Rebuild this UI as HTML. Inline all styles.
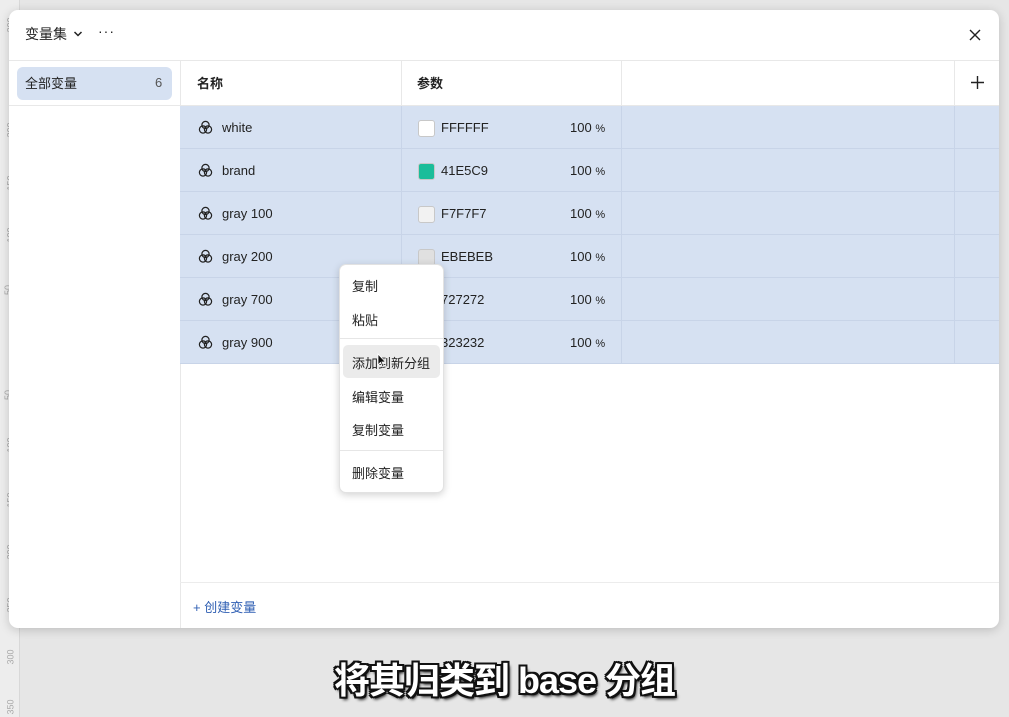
<!DOCTYPE html>
<html><head><meta charset="utf-8"><style>
*{box-sizing:border-box;margin:0;padding:0}
body{width:1009px;height:717px;background:#e6e6e6;position:relative;overflow:hidden;font-family:"Liberation Sans","Noto Sans CJK SC",sans-serif;color:#222;font-size:13px}
.ruler{position:absolute;left:0;top:0;width:20px;height:717px;background:#ededed;border-right:1px solid #d8d8d8}
.rl{position:absolute;left:3px;font-size:9px;color:#aaa;transform:rotate(-90deg)}
.modal{position:absolute;left:9px;top:10px;width:990px;height:618px;background:#fff;border-radius:9px;box-shadow:0 2px 10px rgba(0,0,0,.18);overflow:hidden}
.abs{position:absolute}
.hl{position:absolute;background:#e8e8e8}
.row{position:absolute;left:171px;width:819px;height:43px;background:#d6e1f2;border-bottom:1px solid #c8d4e8}
.cell{position:absolute;top:0;height:43px;line-height:43px;font-size:13px}
.sw{position:absolute;top:14px;width:17px;height:17px;border-radius:3px;border:1px solid #c8c8c8}
.menu{position:absolute;left:339px;top:264px;width:105px;height:229px;background:#fff;border-radius:7px;box-shadow:0 2px 8px rgba(0,0,0,.18);border:1px solid #e2e2e2}
.mi{position:absolute;left:12px;font-size:13px}
.sub{position:absolute;left:0;width:1009px;top:652px;text-align:center;font-size:36px;font-weight:bold;color:#fff;letter-spacing:-1px;text-shadow:-2px 0 #111,2px 0 #111,0 -2px #111,0 2px #111,-2px -2px #111,2px 2px #111,-2px 2px #111,2px -2px #111,2px 3px 3px #000}
</style></head><body>
<div class="ruler">
<div class="rl" style="top:20px">200</div><div class="rl" style="top:125px">200</div><div class="rl" style="top:178px">150</div><div class="rl" style="top:230px">100</div><div class="rl" style="top:285px">50</div><div class="rl" style="top:390px">50</div><div class="rl" style="top:440px">100</div><div class="rl" style="top:495px">150</div><div class="rl" style="top:547px">200</div><div class="rl" style="top:600px">250</div><div class="rl" style="top:652px">300</div><div class="rl" style="top:702px">350</div>
</div>
<div class="modal">
 <div class="abs" style="left:16px;top:14px;font-size:14px">变量集</div>
 <svg class="abs" style="left:64px;top:20px" width="10" height="8" viewBox="0 0 10 8"><path d="M1.5 2 L5 5.5 L8.5 2" stroke="#222" stroke-width="1.5" fill="none"/></svg>
 <div class="abs" style="left:89px;top:13px;font-size:14px;letter-spacing:1px">···</div>
 <svg class="abs" style="left:960px;top:19px" width="12" height="12" viewBox="0 0 12 12"><path d="M1 1L11 11M11 1L1 11" stroke="#222" stroke-width="1.4"/></svg>
 <div class="hl" style="left:0;top:50px;width:990px;height:1px"></div>
 <div class="hl" style="left:171px;top:51px;width:1px;height:567px"></div>
 <div class="abs" style="left:8px;top:57px;width:155px;height:33px;background:#d6e1f2;border-radius:6px"></div>
 <div class="abs" style="left:16px;top:63px;font-size:13px">全部变量</div>
 <div class="abs" style="left:146px;top:65px;font-size:13px;color:#555">6</div>
 <div class="hl" style="left:0;top:95px;width:171px;height:1px"></div>
 <div class="abs" style="left:188px;top:63px;font-weight:bold;font-size:13px">名称</div>
 <div class="abs" style="left:408px;top:63px;font-weight:bold;font-size:13px">参数</div>
 <div class="hl" style="left:392px;top:51px;width:1px;height:303px"></div>
 <div class="hl" style="left:612px;top:51px;width:1px;height:303px"></div>
 <div class="hl" style="left:945px;top:51px;width:1px;height:303px"></div>
 <svg class="abs" style="left:962px;top:66px" width="13" height="13" viewBox="0 0 13 13"><path d="M6.5 0V13M0 6.5H13" stroke="#222" stroke-width="1.4"/></svg>
 <div class="hl" style="left:171px;top:95px;width:819px;height:1px"></div>

 <div id="rows"></div>
 <div class="hl" style="left:171px;top:572px;width:819px;height:1px;background:#ececec"></div>
 <div class="abs" style="left:184px;top:587px;font-size:13px;color:#2f5fb3">+ 创建变量</div>
</div>
<div class="menu">
 <div class="mi" style="top:11px">复制</div>
 <div class="mi" style="top:45px">粘贴</div>
 <div class="abs" style="left:0;top:73px;width:103px;height:1px;background:#e6e6e6"></div>
 <div class="abs" style="left:3px;top:80px;width:97px;height:33px;background:#ebebeb;border-radius:5px"></div>
 <div class="mi" style="top:88px">添加到新分组</div>
 <svg class="abs" style="left:37px;top:88px" width="10" height="15" viewBox="0 0 10 15"><path d="M1 1V12L3.5 9.5L5.5 14L7 13.3L5 9H8.5Z" fill="#111" stroke="#fff" stroke-width="0.8"/></svg>
 <div class="mi" style="top:122px">编辑变量</div>
 <div class="mi" style="top:155px">复制变量</div>
 <div class="abs" style="left:0;top:185px;width:103px;height:1px;background:#e6e6e6"></div>
 <div class="mi" style="top:198px">删除变量</div>
</div>
<div class="sub">将其归类到 base 分组</div>
<script>
var d=[["white","FFFFFF","#ffffff"],["brand","41E5C9","#1bbd9a"],["gray 100","F7F7F7","#f2f2f2"],["gray 200","EBEBEB","#e0e0e0"],["gray 700","727272","#727272"],["gray 900","323232","#323232"]];
var h="";
var ic='<svg style="position:absolute;left:18px;top:14px" width="15" height="15" viewBox="0 0 15 15"><g fill="none" stroke="#222" stroke-width="1.2"><circle cx="7.5" cy="5" r="3.6"/><circle cx="5" cy="9.5" r="3.6"/><circle cx="10" cy="9.5" r="3.6"/></g></svg>';
d.forEach(function(r,i){h+='<div class="row" style="top:'+(96+i*43)+'px">'+ic+'<div class="cell" style="left:42px">'+r[0]+'</div><div class="hl" style="left:221px;top:0;width:1px;height:43px;background:#c8d4e8"></div><div class="hl" style="left:441px;top:0;width:1px;height:43px;background:#c8d4e8"></div><div class="hl" style="left:774px;top:0;width:1px;height:43px;background:#c8d4e8"></div><div class="sw" style="left:238px;background:'+r[2]+'"></div><div class="cell" style="left:261px">'+r[1]+'</div><div class="cell" style="left:390px">100 <span style="font-size:11px">%</span></div></div>';});
document.getElementById("rows").innerHTML=h;
</script>
</body></html>
